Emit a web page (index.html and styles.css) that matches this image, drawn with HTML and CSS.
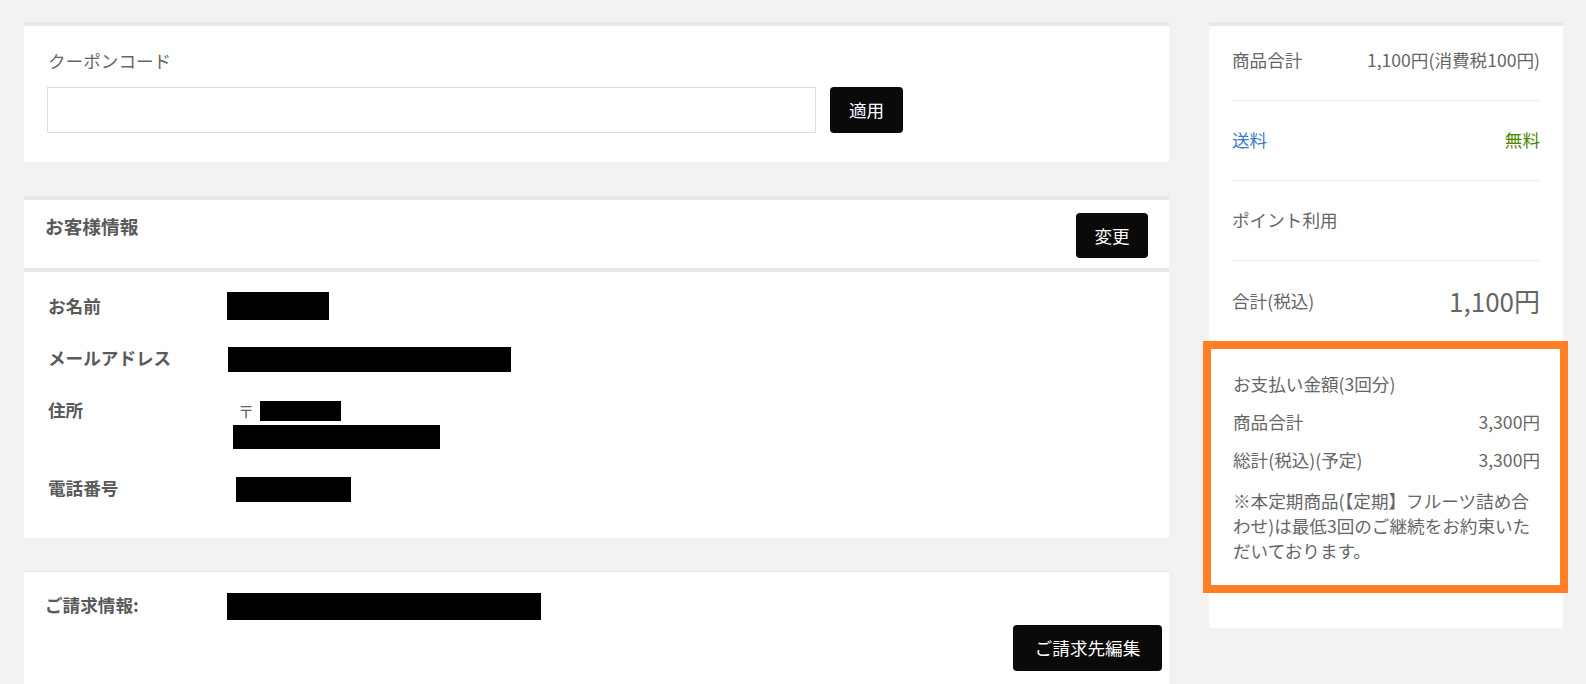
FILE: index.html
```html
<!DOCTYPE html>
<html lang="ja">
<head>
<meta charset="utf-8">
<title>ご注文手続き</title>
<link rel="stylesheet" href="styles.css">
</head>
<body>
<div class="page">
  <div class="main">
    <section class="card coupon">
      <div class="coupon-label">クーポンコード</div>
      <div class="coupon-row">
        <input class="coupon-input" type="text">
        <button class="btn btn-apply">適用</button>
      </div>
    </section>

    <section class="card customer">
      <div class="customer-head">
        <h2 class="customer-title">お客様情報</h2>
        <button class="btn btn-change">変更</button>
      </div>
      <div class="customer-body">
        <div class="info-row">
          <div class="info-label">お名前</div>
          <div class="info-val"><div class="val-line"><span class="redact r-name"></span></div></div>
        </div>
        <div class="info-row">
          <div class="info-label">メールアドレス</div>
          <div class="info-val"><div class="val-line"><span class="redact r-mail"></span></div></div>
        </div>
        <div class="info-row">
          <div class="info-label">住所</div>
          <div class="info-val">
            <div class="val-line zip-line"><span class="zip">〒</span><span class="redact r-zip"></span></div>
            <div class="val-line"><span class="redact r-addr"></span></div>
          </div>
        </div>
        <div class="info-row">
          <div class="info-label">電話番号</div>
          <div class="info-val"><div class="val-line"><span class="redact r-tel"></span></div></div>
        </div>
      </div>
    </section>

    <section class="card billing">
      <div class="billing-row">
        <div class="billing-label">ご請求情報:</div>
        <div class="val-line"><span class="redact r-bill"></span></div>
      </div>
      <div class="billing-actions">
        <button class="btn btn-bill">ご請求先編集</button>
      </div>
    </section>
  </div>

  <aside class="side">
    <section class="card summary">
      <div class="sum-row first">
        <span>商品合計</span>
        <span>1,100円(消費税100円)</span>
      </div>
      <div class="sum-row">
        <span class="shipping">送料</span>
        <span class="free">無料</span>
      </div>
      <div class="sum-row">
        <span>ポイント利用</span>
      </div>
      <div class="sum-row total">
        <span>合計(税込)</span>
        <span class="total-price">1,100円</span>
      </div>
      <div class="payment">
        <div class="pay-title">お支払い金額(3回分)</div>
        <div class="pay-row"><span>商品合計</span><span>3,300円</span></div>
        <div class="pay-row"><span>総計(税込)(予定)</span><span>3,300円</span></div>
        <p class="pay-note">※本定期商品(【定期】フルーツ詰め合<br>わせ)は最低3回のご継続をお約束いた<br>だいております。</p>
      </div>
    </section>
  </aside>
</div>
</body>
</html>
```

FILE: styles.css
```css
* {
  box-sizing: border-box;
}

html, body {
  margin: 0;
  padding: 0;
}

body {
  background: #f2f2f2;
  font-family: "Noto Sans CJK JP", "Noto Sans", sans-serif;
  font-size: 17.6px;
  color: #666;
  overflow: hidden;
  height: 684px;
}

.page {
  display: flex;
  align-items: flex-start;
  gap: 40px;
  padding: 22px 23px 0 24px;
}

.main {
  width: 1145px;
  display: flex;
  flex-direction: column;
}

.side {
  width: 354px;
}

.card {
  background: #fff;
  border-top: 4px solid #e6e9ec;
}

.btn {
  background: #0a0a0a;
  color: #fff;
  border: none;
  border-radius: 4px;
  font-family: inherit;
  font-size: 17.6px;
  line-height: 24px;
  padding: 0;
  cursor: pointer;
}

/* coupon */
.coupon {
  padding: 22px 24px 29px 23px;
}

.coupon-label {
  line-height: 26px;
  margin-left: 1px;
  margin-bottom: 13px;
  color: #666;
}

.coupon-row {
  display: flex;
  gap: 14px;
}

.coupon-input {
  width: 769px;
  height: 46px;
  border: 1px solid #dedede;
  border-radius: 0;
  background: #fff;
  margin: 0;
}

.btn-apply {
  width: 73px;
  height: 46px;
}

/* customer */
.customer {
  margin-top: 34px;
}

.customer-head {
  display: flex;
  justify-content: space-between;
  align-items: flex-start;
  padding: 13px 21px 10px 21px;
  border-bottom: 4px solid #e6e9ec;
}

.customer-title {
  margin: 0;
  font-size: 18.7px;
  font-weight: bold;
  line-height: 26px;
  color: #5a5a5a;
}

.btn-change {
  width: 72px;
  height: 45px;
}

.customer-body {
  padding: 21px 24px 37px 24px;
  display: flex;
  flex-direction: column;
  gap: 26px;
}

.info-row {
  display: flex;
}

.info-label {
  width: 179px;
  flex: none;
  font-weight: bold;
  line-height: 26px;
  color: #5a5a5a;
}

.info-val {
  display: flex;
  flex-direction: column;
}

.val-line {
  height: 26px;
  display: flex;
  align-items: center;
  line-height: 26px;
}

.redact {
  display: block;
  background: #000;
  flex: none;
}

.r-name { width: 102px; height: 28px; margin-top: -1px; }
.r-mail { width: 283px; height: 25px; margin-left: 1px; margin-top: 3px; }
.zip-line { padding-left: 11px; }
.zip { color: #666; font-size: 16px; margin-top: 2px; }
.r-zip { width: 81px; height: 20px; margin-left: 6px; margin-top: 2px; }
.r-addr { width: 207px; height: 24px; margin-left: 6px; margin-top: 2px; }
.r-tel { width: 115px; height: 25px; margin-left: 9px; margin-top: 3px; }

/* billing */
.billing {
  margin-top: 33px;
  border-top: 1px solid #e6e6e6;
  padding: 20px 7px 20px 21px;
}

.billing-row {
  display: flex;
}

.billing-label {
  width: 182px;
  flex: none;
  font-weight: bold;
  line-height: 26px;
  color: #5a5a5a;
}

.r-bill { width: 314px; height: 27px; margin-top: 3px; }

.billing-actions {
  display: flex;
  justify-content: flex-end;
  margin-top: 7px;
}

.btn-bill {
  width: 149px;
  height: 46px;
}

/* summary */
.summary {
  padding: 0 23px 35px 23px;
}

.sum-row {
  display: flex;
  justify-content: space-between;
  align-items: center;
  line-height: 24px;
  padding: 27px 0 28px 0;
  border-bottom: 1px solid #ebebeb;
  color: #666;
}

.sum-row.first {
  padding-top: 22px;
}

.shipping {
  color: #3a7cc4;
}

.free {
  color: #4d8700;
}

.sum-row.total {
  border-bottom: none;
  padding: 25px 0 25px 0;
  line-height: 30px;
}

.total-price {
  font-size: 26px;
  line-height: 30px;
  color: #666;
}

.payment {
  margin: 0 -28px 0 -29px;
  border: 8px solid #ff7f27;
  padding: 22px 20px 22px 22px;
  color: #666;
}

.pay-title {
  line-height: 26px;
}

.pay-row {
  display: flex;
  justify-content: space-between;
  line-height: 26px;
  margin-top: 12px;
}

.pay-note {
  margin: 15px -10px 0 0;
  line-height: 25px;
}
```
